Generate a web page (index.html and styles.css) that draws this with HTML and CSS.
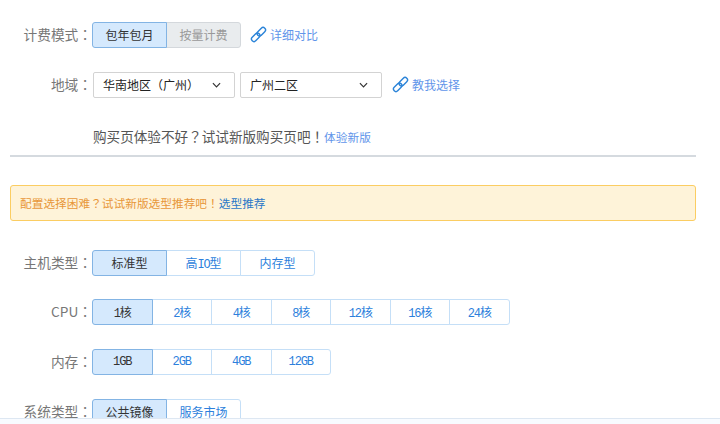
FILE: index.html
```html
<!DOCTYPE html>
<html lang="zh-CN">
<head>
    <meta charset="UTF-8">
    <meta name="viewport" content="width=device-width, initial-scale=1.0">
    <title>购买页</title>
    <link rel="stylesheet" href="styles.css">
</head>
<body>
    <div class="container">
        <div class="form-row">
            <label class="row-label">计费模式<span class="mark">：</span></label>
            <div class="btn-group">
                <button class="opt active">包年包月</button>
                <button class="opt disabled">按量计费</button>
            </div>
            <a class="help-link">
                <svg class="link-icon" viewBox="0 0 18 18"><rect x="8" y="6.4" width="10.4" height="5.2" rx="2.6" transform="rotate(-45 9 9)"/><rect x="-0.4" y="6.4" width="10.4" height="5.2" rx="2.6" transform="rotate(-45 9 9)"/></svg>
                详细对比
            </a>
        </div>

        <div class="form-row">
            <label class="row-label">地域<span class="mark">：</span></label>
            <div class="select-box">
                <span>华南地区（广州）</span>
                <svg class="chevron" viewBox="0 0 10 6"><path d="M1 1 5 5 9 1"/></svg>
            </div>
            <div class="select-box">
                <span>广州二区</span>
                <svg class="chevron" viewBox="0 0 10 6"><path d="M1 1 5 5 9 1"/></svg>
            </div>
            <a class="help-link">
                <svg class="link-icon" viewBox="0 0 18 18"><rect x="8" y="6.4" width="10.4" height="5.2" rx="2.6" transform="rotate(-45 9 9)"/><rect x="-0.4" y="6.4" width="10.4" height="5.2" rx="2.6" transform="rotate(-45 9 9)"/></svg>
                教我选择
            </a>
        </div>

        <p class="notice">购买页体验不好<span class="mark">？</span>试试新版购买页吧<span class="mark">！</span><a>体验新版</a></p>
        <hr class="divider">

        <div class="alert">配置选择困难<span class="mark">？</span>试试新版选型推荐吧<span class="mark">！</span><a>选型推荐</a></div>

        <div class="form-row">
            <label class="row-label">主机类型<span class="mark">：</span></label>
            <div class="btn-group">
                <button class="opt active">标准型</button>
                <button class="opt">高<span class="latin">IO</span>型</button>
                <button class="opt">内存型</button>
            </div>
        </div>

        <div class="form-row">
            <label class="row-label">CPU<span class="mark">：</span></label>
            <div class="btn-group narrow">
                <button class="opt active">1核</button>
                <button class="opt">2核</button>
                <button class="opt">4核</button>
                <button class="opt">8核</button>
                <button class="opt">12核</button>
                <button class="opt">16核</button>
                <button class="opt">24核</button>
            </div>
        </div>

        <div class="form-row">
            <label class="row-label">内存<span class="mark">：</span></label>
            <div class="btn-group narrow">
                <button class="opt active">1GB</button>
                <button class="opt">2GB</button>
                <button class="opt">4GB</button>
                <button class="opt">12GB</button>
            </div>
        </div>

        <div class="form-row">
            <label class="row-label">系统类型<span class="mark">：</span></label>
            <div class="btn-group">
                <button class="opt active">公共镜像</button>
                <button class="opt">服务市场</button>
            </div>
        </div>
    </div>
    <div class="bottom-bar"></div>
</body>
</html>
```

FILE: styles.css
```css
html, body {
    height: 424px;
    overflow: hidden;
}
body {
    margin: 0;
    background: #fff;
    font-family: "Noto Sans CJK SC", "Noto Sans", sans-serif;
    font-size: 12px;
    color: #333;
}
.container {
    box-sizing: border-box;
    width: 696px;
    height: 424px;
    padding: 22px 0 0 10px;
    overflow: hidden;
}
/* centred punctuation, as the page's own font draws it */
.mark {
    font-family: "Noto Sans CJK TC", sans-serif;
    font-feature-settings: "locl" 0;
}
.form-row {
    display: flex;
    align-items: center;
    height: 26px;
    margin-bottom: 23.7px;
}
.row-label {
    width: 82px;
    padding-bottom: 2px;
    text-align: right;
    font-size: 13.7px;
    color: #777;
    white-space: nowrap;
}
.btn-group {
    display: flex;
    height: 26px;
}
.opt {
    width: 75px;
    height: 26px;
    margin: 0 0 0 -1px;
    padding: 0;
    font-family: "Liberation Mono", "Noto Sans CJK SC", monospace;
    font-size: 12px;
    color: #2d7fdc;
    background: #fff;
    border: 1px solid #c5dff7;
}
.opt:first-child {
    margin-left: 0;
    border-radius: 3px 0 0 3px;
}
.opt:last-child {
    border-radius: 0 3px 3px 0;
}
.opt.active {
    position: relative;
    color: #333;
    background: #d5e9fd;
    border-color: #83b4e4;
}
.opt.disabled {
    color: #999;
    background: #e9ecee;
    border-color: #d4d8dc;
}
.latin {
    letter-spacing: -1.2px;
}
.narrow .opt {
    width: 60.5px;
    letter-spacing: -1.1px;
}
.help-link {
    display: flex;
    align-items: center;
    gap: 3px;
    margin-left: 9px;
    padding-bottom: 1px;
    color: #5f95ea;
}
.select-box + .select-box + .help-link {
    margin-left: 10px;
}
.link-icon {
    width: 17px;
    height: 17px;
    fill: none;
    stroke: #2a83d8;
    stroke-width: 1.5;
}
.select-box {
    display: flex;
    align-items: center;
    justify-content: space-between;
    box-sizing: border-box;
    width: 142px;
    height: 26px;
    margin-left: 1px;
    padding: 0 13px 0 9px;
    border: 1px solid #d3d3d3;
    border-radius: 2px;
    color: #222;
}
.select-box + .select-box {
    margin-left: 5px;
}
.chevron {
    width: 9px;
    height: 6px;
    fill: none;
    stroke: #333;
    stroke-width: 1.3;
}
.notice {
    height: 20px;
    margin: 28px 0 0 83px;
    font-size: 13.6px;
    line-height: 20px;
    color: #555;
}
.notice a {
    font-size: 11.7px;
    color: #5f95ea;
}
.divider {
    height: 2px;
    margin: 9px 0 28px;
    border: 0;
    background: #d5dadf;
}
.alert {
    box-sizing: border-box;
    height: 36px;
    margin-bottom: 29px;
    padding-left: 9px;
    font-size: 11.7px;
    line-height: 33px;
    color: #e8973a;
    background: #fef3d9;
    border: 1px solid #fbcd62;
    border-radius: 3px;
}
.alert a {
    color: #2b78c8;
}
.bottom-bar {
    position: absolute;
    left: 0;
    right: 0;
    bottom: 0;
    height: 5px;
    background: #f8fbff;
    border-top: 1px solid #dde7f2;
}
```
